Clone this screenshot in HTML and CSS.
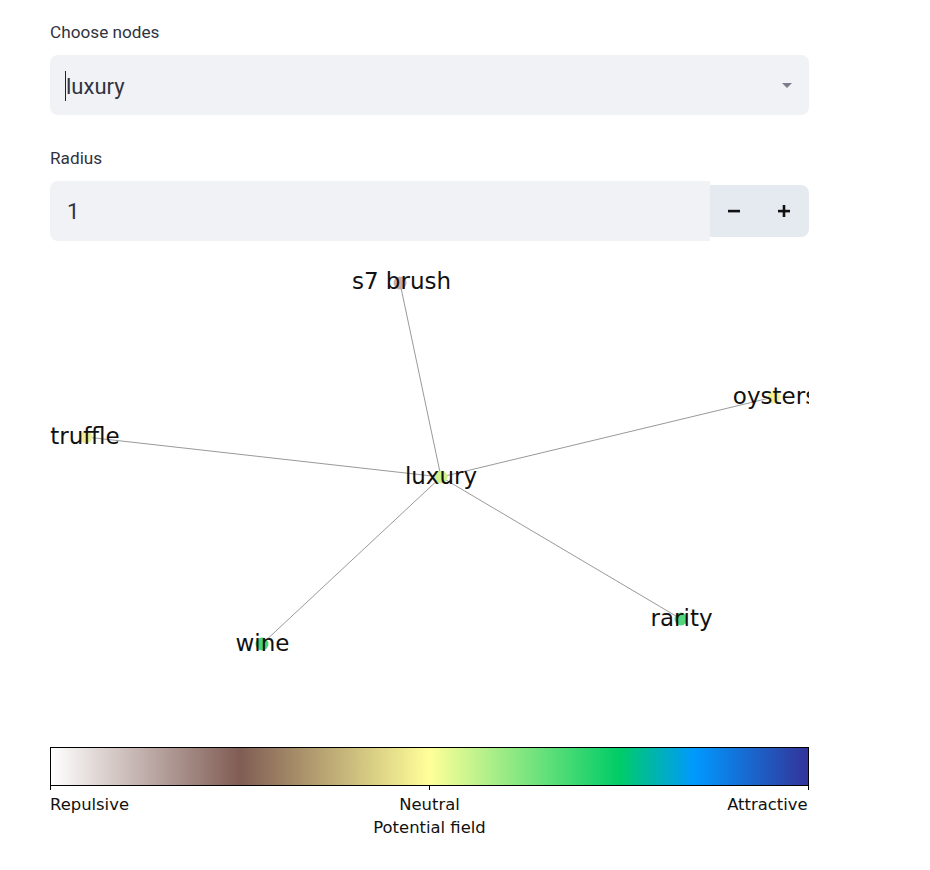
FILE: index.html
```html
<!DOCTYPE html>
<html>
<head>
<meta charset="utf-8">
<link rel="stylesheet" href="styles.css">
</head>
<body>
<main class="app">
  <section class="field field-select">
    <label class="label">Choose nodes</label>
    <div class="select">
      <span class="select-value"><span class="caret"></span>luxury</span>
      <span class="arrow"></span>
    </div>
  </section>
  <section class="field field-number">
    <label class="label">Radius</label>
    <div class="number">
      <div class="number-input">1</div>
      <div class="steps">
        <button class="step">
          <svg width="12" height="12" viewBox="0 0 12 12"><rect x="0" y="4.8" width="12" height="2.6" fill="#111"/></svg>
        </button>
        <button class="step">
          <svg width="12" height="12" viewBox="0 0 12 12"><rect x="0" y="4.8" width="12" height="2.6" fill="#111"/><rect x="4.7" y="0" width="2.6" height="12" fill="#111"/></svg>
        </button>
      </div>
    </div>
  </section>
  <figure class="figure">
    <svg class="graph" width="759" height="600" viewBox="50 250 759 600">
      <defs>
        <linearGradient id="terrain" x1="0" y1="0" x2="1" y2="0">
          <stop offset="0" stop-color="#ffffff"/>
          <stop offset="0.25" stop-color="#805c54"/>
          <stop offset="0.5" stop-color="#ffff99"/>
          <stop offset="0.75" stop-color="#00cc66"/>
          <stop offset="0.85" stop-color="#0099ff"/>
          <stop offset="1" stop-color="#333399"/>
        </linearGradient>
      </defs>
      <g stroke="#444" stroke-width="0.55">
        <line x1="441" y1="477" x2="400" y2="283"/>
        <line x1="441" y1="477" x2="774" y2="397"/>
        <line x1="441" y1="477" x2="86" y2="437"/>
        <line x1="441" y1="477" x2="681" y2="619"/>
        <line x1="441" y1="477" x2="262" y2="644"/>
      </g>
      <g>
        <circle cx="400" cy="283" r="6.5" fill="#c9ada8"/>
        <circle cx="774" cy="397" r="6.5" fill="#f3f095"/>
        <circle cx="86" cy="437" r="6.5" fill="#f0ee92"/>
        <circle cx="441" cy="477" r="6.5" fill="#cff28d"/>
        <circle cx="681" cy="619" r="6.5" fill="#52d67c"/>
        <circle cx="262" cy="644" r="6.5" fill="#49d577"/>
      </g>
      <g class="node-labels" text-anchor="middle">
        <text x="401.5" y="289">s7 brush</text>
        <text x="775" y="404">oysters</text>
        <text x="85" y="444">truffle</text>
        <text x="441" y="484">luxury</text>
        <text x="681.5" y="626">rarity</text>
        <text x="262.5" y="651">wine</text>
      </g>
      <rect x="50.5" y="747.5" width="758" height="38" fill="url(#terrain)" stroke="#000" stroke-width="1"/>
      <g stroke="#000" stroke-width="1">
        <line x1="50.5" y1="786" x2="50.5" y2="790"/>
        <line x1="429.5" y1="786" x2="429.5" y2="790"/>
        <line x1="808.5" y1="786" x2="808.5" y2="790"/>
      </g>
      <g class="cb-labels">
        <text x="50" y="810" text-anchor="start">Repulsive</text>
        <text x="429.5" y="810" text-anchor="middle">Neutral</text>
        <text x="807.5" y="810" text-anchor="end">Attractive</text>
        <text x="429.5" y="833" text-anchor="middle">Potential field</text>
      </g>
    </svg>
  </figure>
</main>
</body>
</html>
```

FILE: styles.css
```css
html, body {
  margin: 0;
  padding: 0;
  background: #ffffff;
}
.app {
  width: 759px;
  padding: 22px 0 0 50px;
  font-family: Roboto, "Noto Sans", sans-serif;
  color: #31333f;
  display: flex;
  flex-direction: column;
}
.field {
  display: flex;
  flex-direction: column;
}
.field-select {
  margin-bottom: 33px;
}
.field-number {
  margin-bottom: 9px;
}
.label {
  font-size: 17.2px;
  line-height: 20px;
  height: 20px;
  margin-bottom: 13px;
}
.select {
  height: 60px;
  background: #f0f2f6;
  border-radius: 8px;
  display: flex;
  align-items: center;
  justify-content: space-between;
  padding: 0 17px 0 15px;
  box-sizing: border-box;
}
.select-value {
  font-size: 22px;
  display: flex;
  align-items: center;
  position: relative;
  top: 1px;
}
.caret {
  width: 1px;
  height: 30px;
  background: #222;
}
.arrow {
  width: 0;
  height: 0;
  border-left: 5px solid transparent;
  border-right: 5px solid transparent;
  border-top: 5px solid #7b7e88;
}
.number {
  display: flex;
  align-items: center;
  height: 60px;
}
.number-input {
  flex: 1;
  height: 60px;
  background: #f0f2f6;
  border-radius: 8px 0 0 8px;
  display: flex;
  align-items: center;
  padding-left: 17px;
  font-size: 22px;
  box-sizing: border-box;
}
.steps {
  display: flex;
  height: 52px;
  width: 99px;
  background: #e5e9f0;
  border-radius: 0 8px 8px 0;
}
.step {
  flex: 1;
  border: none;
  background: transparent;
  padding: 0;
  display: flex;
  align-items: center;
}
.step:first-child {
  justify-content: flex-start;
  padding-left: 18px;
}
.step:last-child {
  justify-content: flex-end;
  padding-right: 19px;
}
.figure {
  margin: 0;
  display: block;
}
.graph {
  display: block;
  overflow: hidden;
}
.node-labels {
  font-family: "DejaVu Sans", sans-serif;
  font-size: 23px;
  fill: #111;
}
.cb-labels {
  font-family: "DejaVu Sans", sans-serif;
  font-size: 16.4px;
  fill: #111;
}
```
